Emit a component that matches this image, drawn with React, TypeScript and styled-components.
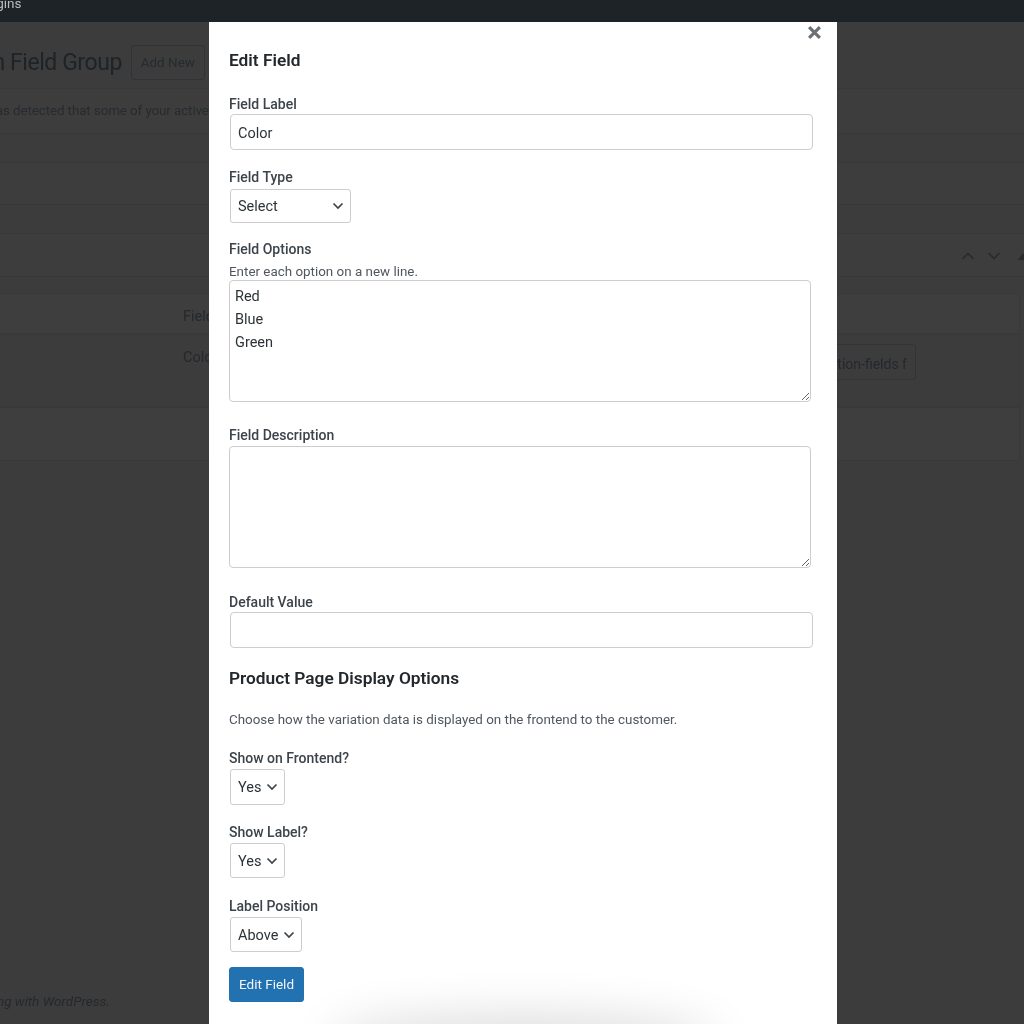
import * as React from 'react';
import styled, { createGlobalStyle } from 'styled-components';
import { ChevronDown, ChevronUp } from 'lucide-react';

const chevron = `url("data:image/svg+xml,%3Csvg xmlns='http://www.w3.org/2000/svg' viewBox='0 0 12 8'%3E%3Cpath d='M1.5 1.5 6 6l4.5-4.5' fill='none' stroke='%233c434a' stroke-width='1.7'/%3E%3C/svg%3E")`;

const GlobalStyle = createGlobalStyle`
  html, body {
    margin: 0;
    padding: 0;
    background: #3c3c3c;
  }
  * {
    box-sizing: border-box;
  }
`;

const Page = styled.div`
  position: relative;
  display: flex;
  flex-direction: column;
  height: 1024px;
  overflow: hidden;
  background: #3c3c3c;
  font-family: Roboto, "Liberation Sans", sans-serif;
  color: #1f2428;
  filter: blur(0.35px);
`;

const AdminBar = styled.div`
  height: 22px;
  flex: none;
  background: #1d2327;
  color: #b9bcbf;
  font-size: 13.5px;
  line-height: 6px;
  white-space: nowrap;
  overflow: hidden;
`;

const AdminItem = styled.span`
  display: block;
  margin-left: -23px;
`;

const TitleRow = styled.div`
  display: flex;
  align-items: center;
  height: 66px;
  flex: none;
  gap: 9px;
  padding-top: 14px;
`;

const Title = styled.h1`
  margin: 0 0 0 -125px;
  font-size: 23px;
  font-weight: 400;
  letter-spacing: -0.45px;
  white-space: nowrap;
  color: #1e2327;
`;

const AddNew = styled.span`
  display: flex;
  align-items: center;
  justify-content: center;
  flex: none;
  width: 74px;
  height: 35px;
  border: 1px solid #2f3337;
  border-radius: 3px;
  font-size: 13.5px;
  color: #262b2f;
`;

const Band = styled.div<{ $height: number; $after?: number }>`
  flex: none;
  display: flex;
  align-items: center;
  height: ${(p) => p.$height}px;
  margin-bottom: ${(p) => p.$after ?? 0}px;
  background: #3d3d3d;
  border-top: 1px solid #383838;
  border-bottom: 1px solid #383838;
`;

const Notice = styled.span`
  margin-left: -106px;
  padding-bottom: 2px;
  font-size: 13.4px;
  letter-spacing: -0.1px;
  white-space: nowrap;
  color: #272b2f;
`;

const Sorters = styled.div`
  display: flex;
  align-items: center;
  gap: 6px;
  margin-left: auto;
  margin-right: -4px;
  padding-top: 2px;
  color: #272b2f;
`;

const Triangle = styled.span`
  width: 0;
  height: 0;
  margin-left: 8px;
  border-left: 5px solid transparent;
  border-right: 5px solid transparent;
  border-bottom: 7px solid #272b2f;
`;

const Table = styled.div`
  flex: none;
  margin: 16px 4px 0 0;
  border-right: 1px solid #393939;
`;

const TableRow = styled.div<{ $height: number; $alt?: boolean }>`
  display: flex;
  height: ${(p) => p.$height}px;
  padding-left: 183px;
  background: ${(p) => (p.$alt ? '#3e3e3e' : '#3c3c3c')};
  border-top: 1px solid #393939;
  border-bottom: 1px solid #393939;
  font-size: 14.5px;
`;

const Cell = styled.span`
  padding-top: 14px;
  color: #24282c;
`;

const Chip = styled.span`
  margin-left: auto;
  margin-top: 9px;
  margin-right: 103px;
  display: flex;
  align-items: center;
  justify-content: flex-end;
  width: 200px;
  height: 36px;
  padding: 3px 8px 0 0;
  border: 1px solid #343434;
  border-radius: 3px;
  font-size: 14px;
  white-space: nowrap;
  overflow: hidden;
  color: #24282c;
`;

const Footer = styled.div`
  margin-top: auto;
  margin-bottom: 15px;
  margin-left: -119px;
  font-size: 13.5px;
  font-style: italic;
  white-space: nowrap;
  color: #25292d;
`;

const Modal = styled.form`
  position: absolute;
  top: 22px;
  bottom: 0;
  left: 209px;
  width: 628px;
  padding: 26px 25px 0 20px;
  background: #fff;
  overflow: hidden;
`;

const Close = styled.button`
  position: absolute;
  top: 3px;
  right: 15px;
  padding: 0;
  border: 0;
  background: none;
  color: #6c7176;
  line-height: 0;
`;

const Heading = styled.h2<{ $top?: number }>`
  margin: ${(p) => p.$top ?? 0}px 0 0;
  font-size: 17.3px;
  line-height: 24px;
  font-weight: 600;
  color: #23282d;
`;

const Field = styled.div<{ $top: number }>`
  margin-top: ${(p) => p.$top}px;
`;

const Label = styled.label<{ $after?: number }>`
  display: block;
  margin-bottom: ${(p) => p.$after ?? 2}px;
  font-size: 14px;
  line-height: 18px;
  font-weight: 500;
  color: #3c434a;
`;

const Hint = styled.p<{ $top?: number }>`
  margin: ${(p) => p.$top ?? 0}px 0 0;
  padding-top: 1px;
  font-size: 13.4px;
  line-height: 17px;
  color: #50575e;
`;

const Input = styled.input`
  display: block;
  width: 583px;
  height: 36px;
  margin-left: 1px;
  padding: 2px 7px 0;
  border: 1px solid #cdcdcd;
  border-radius: 4px;
  background: #fff;
  font: 14.5px Roboto, "Liberation Sans", sans-serif;
  color: #2c3338;
  outline: none;
`;

const Select = styled.select<{ $width: number; $height?: number }>`
  display: block;
  width: ${(p) => p.$width}px;
  height: ${(p) => p.$height ?? 35}px;
  margin-left: 1px;
  padding: 1px 20px 0 7px;
  border: 1px solid #cdcdcd;
  border-radius: 3px;
  appearance: none;
  background: #fff ${chevron} no-repeat right 6px center / 12px 8px;
  font: 14.5px Roboto, "Liberation Sans", sans-serif;
  color: #2c3338;
`;

const TextArea = styled.textarea`
  display: block;
  width: 582px;
  height: 122px;
  padding: 4px 5px;
  border: 1px solid #cdcdcd;
  border-radius: 4px;
  background: #fff;
  font: 14.5px/23px Roboto, "Liberation Sans", sans-serif;
  color: #2c3338;
  outline: none;
`;

const Submit = styled.button`
  display: block;
  width: 75px;
  height: 35px;
  margin-top: 15px;
  padding: 0 0 2px;
  border: 1px solid #2271b1;
  border-radius: 3px;
  background: #2271b1;
  font: 13.5px Roboto, "Liberation Sans", sans-serif;
  color: #f2f6fa;
`;

const BottomGlow = styled.div`
  position: absolute;
  left: 130px;
  right: 130px;
  bottom: -34px;
  height: 30px;
  border-radius: 50%;
  box-shadow: 0 0 48px 12px rgba(0, 0, 0, 0.14);
`;

export default function App() {
  return (
    <Page>
      <GlobalStyle />
      <AdminBar>
        <AdminItem>Plugins</AdminItem>
      </AdminBar>
      <TitleRow>
        <Title>Edit Variation Field Group</Title>
        <AddNew>Add New</AddNew>
      </TitleRow>
      <Band $height={46} $after={28}>
        <Notice>WooCommerce has detected that some of your active plugins</Notice>
      </Band>
      <Band $height={43} $after={28} />
      <Band $height={44}>
        <Sorters>
          <ChevronUp size={20} />
          <ChevronDown size={20} />
          <Triangle />
        </Sorters>
      </Band>
      <Table>
        <TableRow $height={41} $alt>
          <Cell>Field Name</Cell>
        </TableRow>
        <TableRow $height={73}>
          <Cell>Color</Cell>
          <Chip>variation-fields f</Chip>
        </TableRow>
        <TableRow $height={54} $alt />
      </Table>
      <Footer>Thank you for creating with WordPress.</Footer>

      <Modal onSubmit={(e) => e.preventDefault()}>
        <Close type="button" aria-label="Close">
          <svg width="15" height="15" viewBox="0 0 14 14">
            <path d="M2 2l10 10M12 2L2 12" stroke="currentColor" strokeWidth="3" />
          </svg>
        </Close>
        <Heading>Edit Field</Heading>

        <Field $top={23}>
          <Label $after={1}>Field Label</Label>
          <Input defaultValue="Color" />
        </Field>

        <Field $top={18}>
          <Label $after={3}>Field Type</Label>
          <Select $width={121} $height={34} defaultValue="Select">
            <option>Select</option>
          </Select>
        </Field>

        <Field $top={17}>
          <Label $after={4}>Field Options</Label>
          <Hint>Enter each option on a new line.</Hint>
          <TextArea defaultValue={'Red\nBlue\nGreen'} />
        </Field>

        <Field $top={24}>
          <Label>Field Description</Label>
          <TextArea />
        </Field>

        <Field $top={25}>
          <Label $after={1}>Default Value</Label>
          <Input />
        </Field>

        <Heading $top={18}>Product Page Display Options</Heading>
        <Hint $top={20}>Choose how the variation data is displayed on the frontend to the customer.</Hint>

        <Field $top={21}>
          <Label>Show on Frontend?</Label>
          <Select $width={55} $height={36} defaultValue="Yes">
            <option>Yes</option>
          </Select>
        </Field>

        <Field $top={18}>
          <Label>Show Label?</Label>
          <Select $width={55} defaultValue="Yes">
            <option>Yes</option>
          </Select>
        </Field>

        <Field $top={19}>
          <Label>Label Position</Label>
          <Select $width={72} defaultValue="Above">
            <option>Above</option>
          </Select>
        </Field>

        <Submit type="submit">Edit Field</Submit>
        <BottomGlow />
      </Modal>
    </Page>
  );
}
